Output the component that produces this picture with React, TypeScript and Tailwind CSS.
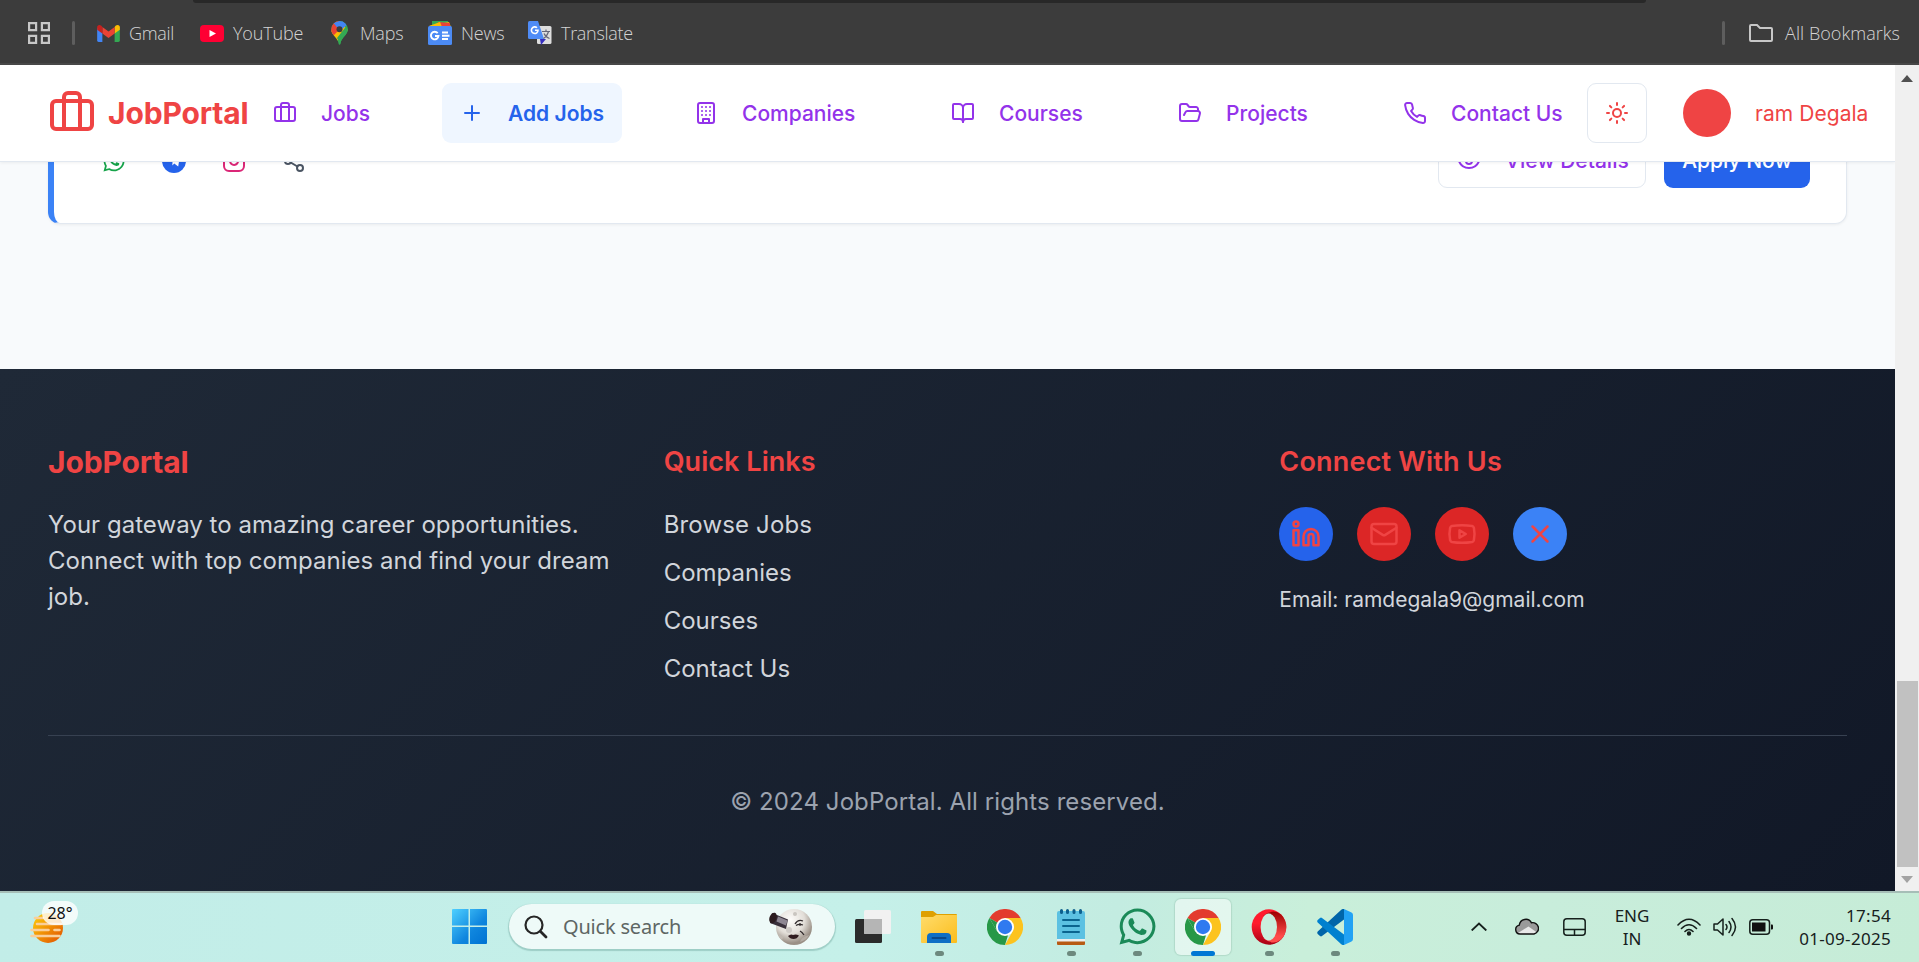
import React from "react";
import { FaWhatsapp } from "react-icons/fa";

const stroke = {
  viewBox: "0 0 24 24",
  fill: "none",
  stroke: "currentColor",
  strokeWidth: 2,
  strokeLinecap: "round" as const,
  strokeLinejoin: "round" as const,
};

function Icon({ name, className = "size-6" }: { name: string; className?: string }) {
  const shapes: Record<string, React.ReactNode> = {
    briefcase: (
      <>
        <path d="M16 20V4a2 2 0 0 0-2-2h-4a2 2 0 0 0-2 2v16" />
        <rect width="20" height="14" x="2" y="6" rx="2" />
      </>
    ),
    plus: <path d="M5 12h14M12 5v14" />,
    building: (
      <>
        <rect width="16" height="20" x="4" y="2" rx="2" />
        <path d="M9 22v-4h6v4M8 6h.01M16 6h.01M12 6h.01M12 10h.01M12 14h.01M16 10h.01M16 14h.01M8 10h.01M8 14h.01" />
      </>
    ),
    book: (
      <>
        <path d="M12 7v14" />
        <path d="M3 18a1 1 0 0 1-1-1V4a1 1 0 0 1 1-1h5a4 4 0 0 1 4 4 4 4 0 0 1 4-4h5a1 1 0 0 1 1 1v13a1 1 0 0 1-1 1h-6a3 3 0 0 0-3 3 3 3 0 0 0-3-3z" />
      </>
    ),
    folder: (
      <path d="m6 14 1.5-2.9A2 2 0 0 1 9.24 10H20a2 2 0 0 1 1.94 2.5l-1.54 6a2 2 0 0 1-1.95 1.5H4a2 2 0 0 1-2-2V5a2 2 0 0 1 2-2h3.9a2 2 0 0 1 1.69.9l.81 1.2a2 2 0 0 0 1.67.9H18a2 2 0 0 1 2 2v2" />
    ),
    phone: (
      <path d="M22 16.92v3a2 2 0 0 1-2.18 2 19.79 19.79 0 0 1-8.63-3.07 19.5 19.5 0 0 1-6-6 19.79 19.79 0 0 1-3.07-8.67A2 2 0 0 1 4.11 2h3a2 2 0 0 1 2 1.72 12.84 12.84 0 0 0 .7 2.81 2 2 0 0 1-.45 2.11L8.09 9.91a16 16 0 0 0 6 6l1.27-1.27a2 2 0 0 1 2.11-.45 12.84 12.84 0 0 0 2.81.7A2 2 0 0 1 22 16.92z" />
    ),
    sun: (
      <>
        <circle cx="12" cy="12" r="4" />
        <path d="M12 2v2M12 20v2M4.93 4.93l1.41 1.41M17.66 17.66l1.41 1.41M2 12h2M20 12h2M6.34 17.66l-1.41 1.41M19.07 4.93l-1.41 1.41" />
      </>
    ),
    eye: (
      <>
        <path d="M2.062 12.348a1 1 0 0 1 0-.696 10.75 10.75 0 0 1 19.876 0 1 1 0 0 1 0 .696 10.75 10.75 0 0 1-19.876 0" />
        <circle cx="12" cy="12" r="3" />
      </>
    ),
    instagram: (
      <>
        <rect width="20" height="20" x="2" y="2" rx="5" />
        <path d="M16 11.37A4 4 0 1 1 12.63 8 4 4 0 0 1 16 11.37zM17.5 6.5h.01" />
      </>
    ),
    share: (
      <>
        <circle cx="18" cy="5" r="3" />
        <circle cx="6" cy="12" r="3" />
        <circle cx="18" cy="19" r="3" />
        <path d="m8.59 13.51 6.83 3.98M15.41 6.51l-6.82 3.98" />
      </>
    ),
    linkedin: (
      <>
        <path d="M16 8a6 6 0 0 1 6 6v7h-4v-7a2 2 0 0 0-2-2 2 2 0 0 0-2 2v7h-4v-7a6 6 0 0 1 6-6z" />
        <rect width="4" height="12" x="2" y="9" />
        <circle cx="4" cy="4" r="2" />
      </>
    ),
    mail: (
      <>
        <rect width="20" height="16" x="2" y="4" rx="2" />
        <path d="m22 7-8.97 5.7a1.94 1.94 0 0 1-2.06 0L2 7" />
      </>
    ),
    youtube: (
      <>
        <path d="M2.5 17a24.12 24.12 0 0 1 0-10 2 2 0 0 1 1.4-1.4 49.56 49.56 0 0 1 16.2 0A2 2 0 0 1 21.5 7a24.12 24.12 0 0 1 0 10 2 2 0 0 1-1.4 1.4 49.55 49.55 0 0 1-16.2 0A2 2 0 0 1 2.5 17" />
        <path d="m10 15 5-3-5-3z" />
      </>
    ),
    x: <path d="M18 6 6 18M6 6l12 12" />,
  };
  return (
    <svg {...stroke} className={`shrink-0 ${className}`}>
      {shapes[name]}
    </svg>
  );
}

function Telegram() {
  return (
    <svg viewBox="0 0 24 24" className="size-6">
      <circle cx="12" cy="12" r="12" fill="#2563eb" />
      <path d="M5 11.800 18 6.500l-1.800 11-3.900-2.900-2 2 .2-3.600z" fill="#fff" />
    </svg>
  );
}

function Gmail() {
  return (
    <svg viewBox="0 0 24 18" className="h-[17px] w-[23px]">
      <path d="M0 3v13.500Q0 18 1.500 18H5.500V8z" fill="#4285f4" />
      <path d="M24 3v13.500Q24 18 22.500 18H18.500V8z" fill="#34a853" />
      <path d="M18.500 2v7L24 5V2.500C24 0 21.500-.8 19.500.9z" fill="#fbbc04" />
      <path d="M5.500 9V2L12 6.800 18.500 2v7L12 13.800z" fill="#ea4335" />
      <path d="M0 2.500V5l5.500 4V2L4.500.9C2.500-.8 0 0 0 2.500z" fill="#c5221f" />
    </svg>
  );
}

function YouTube() {
  return (
    <svg viewBox="0 0 24 17" className="h-[17px] w-6">
      <rect width="24" height="17" rx="4" fill="#ff0033" />
      <path d="M9.500 5v7l6.500-3.500z" fill="#fff" />
    </svg>
  );
}

function Maps() {
  return (
    <svg viewBox="0 0 17 24" className="h-6 w-[17px]">
      <defs>
        <clipPath id="pin">
          <path d="M8.500 0a8.300 8.300 0 0 1 8.300 8.300c0 4-3 6-5 9-1.600 2.400-2 3.200-2.400 5.500-.2 1.400-1.600 1.400-1.800 0-.4-2.300-.8-3.100-2.400-5.500-2-3-5-5-5-9A8.300 8.300 0 0 1 8.500 0z" />
        </clipPath>
      </defs>
      <g clipPath="url(#pin)">
        <rect width="17" height="24" fill="#34a853" />
        <path d="M-2 12 6 3l6 1 5 5-12 12z" fill="#fbbc04" />
        <path d="M0 0h8L9 8l-6 6H0z" fill="#ea4335" />
        <path d="M2.500 2 8 0h9v3L9 10z" fill="#4285f4" />
        <path d="M17 3 6 17l4 7 8-10z" fill="#34a853" />
      </g>
      <circle cx="8.500" cy="8.300" r="3" fill="#3c3c3c" />
    </svg>
  );
}

function News() {
  return (
    <svg viewBox="0 0 24 24" className="size-6">
      <path d="M4 0h16v5H4z" fill="#34a853" />
      <path d="m1 5 20-4 2 5z" fill="#fbbc04" />
      <path d="m10 1 12 1v5H9z" fill="#ea4335" />
      <path d="m1 5 11-4 2 5z" fill="#fbbc04" />
      <rect y="5" width="24" height="19" rx="1.500" fill="#4c8bf5" />
      <path d="M9.700 12.200A3.800 3.800 0 1 0 10.500 15H7M14 11.500h6M14 14.700h7.500M14 18h6" fill="none" stroke="#fff" strokeWidth="1.900" />
    </svg>
  );
}

function Translate() {
  return (
    <svg viewBox="0 0 24 24" className="size-6">
      <rect x="9" y="5" width="14.500" height="18" rx="1.500" fill="#dedede" />
      <path d="M12 18h6l-5 6z" fill="#3730c0" />
      <path d="M1.500 0H10l6 18H1.500Q0 18 0 16.500v-15Q0 0 1.500 0z" fill="#4f8cf7" />
      <path d="M9 6.800A3.300 3.300 0 1 0 10 9.200H7" fill="none" stroke="#fff" strokeWidth="1.600" />
      <path d="M14 10.500h8M18 8.500v2M20.500 10.500q-1.500 5-5 7M16 12.500q2 4 5.500 5" fill="none" stroke="#667" strokeWidth="1.200" />
    </svg>
  );
}

function BookmarksBar() {
  const text = "font-['Open_Sans',sans-serif] font-light text-[18px] leading-6 text-[#d4d4d4] whitespace-nowrap";
  return (
    <div className="relative flex h-[65px] shrink-0 items-center border-b-2 border-[#474747] bg-[#3c3c3c] pt-[3px] pl-7 pr-[19px]">
      <div className="absolute top-0 left-[193px] h-[3px] w-[1453px] rounded-b-[8px] bg-[#282828]" />
      <svg viewBox="0 0 22 22" className="size-[22px]" fill="none" stroke="#c7c7c7" strokeWidth="2.200">
        <path d="M1.100 1.100h7v7h-7zM13.900 1.100h7v7h-7zM1.100 13.900h7v7h-7zM13.900 13.900h7v7h-7z" />
      </svg>
      <div className="ml-[22px] h-6 w-[3px] rounded bg-[#5e5e5e]" />
      <div className="ml-[22px] flex w-[103px] items-center gap-[9px]"><Gmail /><span className={`${text} tracking-[-0.3px]`}>Gmail</span></div>
      <div className="flex w-[131px] items-center gap-[9px]"><YouTube /><span className={`${text} tracking-[-0.15px]`}>YouTube</span></div>
      <div className="flex w-[97px] items-center gap-[12px]"><Maps /><span className={`${text} tracking-[-0.2px]`}>Maps</span></div>
      <div className="flex w-[100px] items-center gap-[9px]"><News /><span className={`${text} tracking-[-0.2px]`}>News</span></div>
      <div className="flex items-center gap-[9px]"><Translate /><span className={`${text} tracking-[-0.3px]`}>Translate</span></div>
      <div className="ml-auto h-6 w-[3px] rounded bg-[#5e5e5e]" />
      <svg viewBox="0 0 24 18" className="mr-3 ml-6 h-[18px] w-6" fill="none" stroke="#c7c7c7" strokeWidth="2">
        <path d="M1 16V2q0-1 1-1h6l3 3h11q1 0 1 1v11q0 1-1 1H2q-1 0-1-1z" />
      </svg>
      <span className={`${text} tracking-[0.05px]`}>All Bookmarks</span>
    </div>
  );
}

function NavItem({ icon, label, width }: { icon: string; label: string; width: string }) {
  return (
    <div className={`flex h-[60px] items-center gap-6 pl-[18px] ${width}`}>
      <Icon name={icon} />
      <span className="whitespace-nowrap pt-px">{label}</span>
    </div>
  );
}

function Header() {
  return (
    <header className="relative z-10 flex h-[97px] w-full shrink-0 items-center border-b border-[#e2e8f0] bg-white pl-12 text-[21px] font-medium text-[#9333ea] shadow-[0_1px_3px_rgba(0,0,0,0.06)]">
      <div className="flex w-[207px] items-center gap-3 text-[#ef4444]">
        <Icon name="briefcase" className="size-12" />
        <span className="text-[30px] font-bold leading-[42px] tracking-[-0.15px]">JobPortal</span>
      </div>
      <NavItem icon="briefcase" label="Jobs" width="w-[187px]" />
      <div className="mr-[54px] flex h-[60px] w-[180px] items-center gap-6 rounded-[9px] bg-[#eff6ff] pl-[18px] font-semibold text-[#2563eb]">
        <Icon name="plus" />
        <span className="whitespace-nowrap pt-px">Add Jobs</span>
      </div>
      <NavItem icon="building" label="Companies" width="w-[257px]" />
      <NavItem icon="book" label="Courses" width="w-[227px]" />
      <NavItem icon="folder" label="Projects" width="w-[225px]" />
      <NavItem icon="phone" label="Contact Us" width="w-[202px]" />
      <div className="flex size-[60px] shrink-0 items-center justify-center rounded-[9px] border border-[#e2e8f0] text-[#ef4444]">
        <Icon name="sun" />
      </div>
      <div className="ml-9 size-12 shrink-0 rounded-full bg-[#ef4444]" />
      <span className="ml-6 whitespace-nowrap pt-px font-normal tracking-[0.05px] text-[#ef4444]">ram Degala</span>
    </header>
  );
}

function JobCard() {
  return (
    <main className="h-[207px] shrink-0 overflow-hidden bg-[#f8fafc] px-12">
      <div className="-mt-16 flex h-[126px] items-end rounded-xl border border-l-[6px] border-[#e2e8f0] border-l-[#3b82f6] bg-white pr-9 pb-[35px] pl-12 shadow-[0_1px_3px_rgba(0,0,0,0.06)]">
        <div className="flex h-[54px] items-center gap-9">
          <FaWhatsapp className="size-6 text-[#16a34a]" />
          <Telegram />
          <Icon name="instagram" className="size-6 text-[#db2777]" />
          <Icon name="share" className="size-6 text-[#4b5563]" />
        </div>
        <div className="ml-auto flex gap-[18px] text-[21px] font-medium">
          <div className="flex h-[54px] w-[208px] items-center gap-6 rounded-[9px] border border-[#e2e8f0] pl-[18px] text-[#9333ea]">
            <Icon name="eye" />
            <span className="whitespace-nowrap">View Details</span>
          </div>
          <div className="flex h-[54px] w-[146px] items-center justify-center rounded-[9px] bg-[#2563eb] text-white">Apply Now</div>
        </div>
      </div>
    </main>
  );
}

function Footer() {
  const social = [
    { icon: "linkedin", bg: "bg-[#2563eb]" },
    { icon: "mail", bg: "bg-[#dc2626]" },
    { icon: "youtube", bg: "bg-[#dc2626]" },
    { icon: "x", bg: "bg-[#3b82f6]" },
  ];
  return (
    <footer className="h-[522px] shrink-0 bg-[linear-gradient(135deg,#1f2937,#111827)] px-12 pt-[72px] text-2xl leading-9 text-[#d1d5db]">
      <div className="grid grid-cols-3 gap-12">
        <section>
          <h3 className="mb-6 text-[30px] font-bold leading-[42px] tracking-[-0.15px] text-[#ef4444]">JobPortal</h3>
          <p className="tracking-[0.03px]">Your gateway to amazing career opportunities. Connect with top companies and find your dream job.</p>
        </section>
        <section>
          <h4 className="mb-6 text-[27px] font-semibold leading-[42px] tracking-[0.05px] text-[#ef4444]">Quick Links</h4>
          <ul className="flex flex-col gap-3">
            <li className="tracking-[0.15px]">Browse Jobs</li>
            <li>Companies</li>
            <li>Courses</li>
            <li>Contact Us</li>
          </ul>
        </section>
        <section>
          <h4 className="mb-6 text-[27px] font-semibold leading-[42px] tracking-[0.2px] text-[#ef4444]">Connect With Us</h4>
          <div className="flex gap-6 text-[#ef4444]">
            {social.map((s) => (
              <div key={s.icon} className={`flex size-[54px] items-center justify-center rounded-full ${s.bg}`}>
                <Icon name={s.icon} className="size-[30px]" />
              </div>
            ))}
          </div>
          <p className="mt-6 text-[21px] leading-[30px]">Email: ramdegala9@gmail.com</p>
        </section>
      </div>
      <div className="mt-12 border-t border-[#374151] pt-12 text-center tracking-[0.09px] text-[#9ca3af]">© 2024 JobPortal. All rights reserved.</div>
    </footer>
  );
}

function Scrollbar() {
  return (
    <div className="flex w-6 flex-col items-center bg-[#f0f0f0]">
      <svg viewBox="0 0 12 7" className="mt-[10px] h-[7px] w-3"><path d="M0 7 6 0l6 7z" fill="#505050" /></svg>
      <div className="mt-[599px] h-[186px] w-[21px] bg-[#c1c1c1]" />
      <svg viewBox="0 0 12 7" className="mt-[9px] h-[7px] w-3"><path d="M0 0h12L6 7z" fill="#a3a3a3" /></svg>
    </div>
  );
}

function Weather() {
  return (
    <div className="relative ml-[29px] h-[44px] w-[50px]">
      <svg viewBox="0 0 36 44" className="h-[44px] w-9">
        <defs>
          <linearGradient id="sun" x1="0" y1="0" x2="1" y2="1">
            <stop stopColor="#ffd20a" />
            <stop offset="1" stopColor="#e04e00" />
          </linearGradient>
        </defs>
        <circle cx="19" cy="27" r="15" fill="url(#sun)" />
        <path d="M6 17h8M8 23h24M2.500 29h17M25.500 29h5M2.500 35h28" stroke="#f9cf9a" strokeWidth="2.600" strokeLinecap="round" />
      </svg>
      <div className="absolute top-0 left-[13px] flex h-6 w-9 items-center justify-center rounded-full bg-white/80 font-['Noto_Sans',sans-serif] text-[16px] text-[#111]">28°</div>
    </div>
  );
}

function Moon() {
  return (
    <svg viewBox="0 0 44 38" className="h-[38px] w-11">
      <defs>
        <radialGradient id="moon" cx=".4" cy=".3" r=".65">
          <stop stopColor="#fdfcfa" />
          <stop offset=".6" stopColor="#e2ded8" />
          <stop offset="1" stopColor="#9a9086" />
        </radialGradient>
      </defs>
      <circle cx="25" cy="19" r="18" fill="url(#moon)" />
      <circle cx="26" cy="6" r="2" fill="#c9c5c0" />
      <path d="M31 34q1-5 9-7-2 5-9 7" fill="#b4aca4" />
      <path d="M9 26q4 0 5 3.500l-1 2.500q-3-2-4-6" fill="#c0b9b2" />
      <circle cx="20" cy="22" r="3" fill="#cfcbc7" />
      <path d="M26 16q3-5 8-3M27 17.500q3-2 7-.5M31 23q2 1 4 4" fill="none" stroke="#302a2b" strokeWidth="1.300" />
      <circle cx="31" cy="16.500" r="1.200" fill="#302a2b" />
      <path d="M19 28q3-2.500 5-1 3-1 6 .500-2 3.500-5.500 3.500T19 28" fill="#301c20" />
      <path d="m3 5 16 6.500-2 9.500L1 15z" fill="#39303b" />
      <path d="m9 8.500 9.500 4-1.500 5-9.500-4z" fill="#8e8793" />
      <ellipse cx="4" cy="10" rx="3.500" ry="5.500" transform="rotate(20 4 10)" fill="#2b1c20" />
    </svg>
  );
}

function Chrome() {
  return (
    <svg viewBox="0 0 48 48" className="size-9">
      <path d="M24 24 3.200 12A24 24 0 0 1 44.800 12z" fill="#e33b2e" />
      <path d="M24 48A24 24 0 0 1 3.200 12l10.400 18L28 35z" fill="#279847" />
      <path d="M3.200 12 13.600 30 24 24z" fill="#279847" />
      <path d="M44.800 12H24v4l12 8-2 6-10 18A24 24 0 0 0 44.800 12z" fill="#fcc31e" />
      <circle cx="24" cy="24" r="12" fill="#fff" />
      <circle cx="24" cy="24" r="9.600" fill="#2f7af0" />
    </svg>
  );
}

function Folder() {
  return (
    <svg viewBox="0 0 36 36" className="size-9">
      <defs>
        <linearGradient id="fold" x1="0" y1="0" x2="1" y2="1">
          <stop stopColor="#ffdc6b" />
          <stop offset="1" stopColor="#fbbd1c" />
        </linearGradient>
      </defs>
      <path d="M0 3q0-1 1-1h11l4 3h19q1 0 1 1v6H0z" fill="#dfa000" />
      <path d="M0 8h12l3-2h21v27q0 1-1 1H1q-1 0-1-1z" fill="url(#fold)" />
      <path d="M6 34V28q0-4 4-4h16q4 0 4 4v6z" fill="#0f6fc5" />
      <path d="M11.500 29h13" stroke="#0a4a8c" strokeWidth="2" strokeLinecap="round" />
    </svg>
  );
}

function Notepad() {
  return (
    <svg viewBox="0 0 28 36" className="h-9 w-7">
      <path d="M0 31h28v4q0 1-1 1H1q-1 0-1-1z" fill="#b75a13" />
      <path d="M0 29h28v3.500H0z" fill="#eee" />
      <path d="M0 4q0-2 2-2h24q2 0 2 2v26H0z" fill="#5cc1e2" />
      <path d="M4.500 1.500v2M10.500 1.500v2M17 1.500v2M23.500 1.500v2" stroke="#0d5f8d" strokeWidth="3" strokeLinecap="round" />
      <path d="M6 11h16M6 17h16M6 23h16" stroke="#0b648f" strokeWidth="2" strokeLinecap="round" />
    </svg>
  );
}

function Opera() {
  return (
    <svg viewBox="0 0 36 36" className="size-9">
      <defs>
        <linearGradient id="op" x1="0" y1="0" x2="0" y2="1">
          <stop stopColor="#ff1b2d" />
          <stop offset=".4" stopColor="#ff1b2d" />
          <stop offset="1" stopColor="#a70014" />
        </linearGradient>
        <linearGradient id="op2" x1="0" y1="0" x2="0" y2="1">
          <stop stopColor="#9c0000" />
          <stop offset=".8" stopColor="#ff4b4b" />
        </linearGradient>
      </defs>
      <ellipse cx="18" cy="18" rx="17.300" ry="17.700" fill="url(#op)" />
      <path d="M12 7q10-8 18-1.500a17.500 17.500 0 0 1 0 25Q22 37 12 29q11 3 14-11Q23 4 12 7z" fill="url(#op2)" />
      <ellipse cx="17.800" cy="18" rx="8.200" ry="13.500" fill="#c9eedd" />
    </svg>
  );
}

function VsCode() {
  return (
    <svg viewBox="0 0 36 36" className="size-9">
      <path d="M27 0v10.500L5 27q-1 .8-2 0l-2.300-2q-1-1.200 0-2.500L24 1q1.500-1.300 3-1z" fill="#0065a9" />
      <path d="M27 36V25.500L5 9q-1-.8-2 0L.7 11q-1 1.200 0 2.500L24 35q1.500 1.300 3 1z" fill="#0080cf" />
      <path d="m27 0 7.500 3.500Q36 4.300 36 6v24q0 1.700-1.500 2.500L27 36z" fill="#22a2f4" />
    </svg>
  );
}

function Task({ children, dot, active }: { children: React.ReactNode; dot?: boolean; active?: boolean }) {
  return (
    <div className="flex w-[66px] shrink-0 justify-center">
      <div className={`relative flex h-14 w-14 items-center justify-center rounded-md ${active ? "bg-white/50 shadow-[0_0_1px_1px_rgba(60,110,90,0.15)]" : ""}`}>
        {children}
        {dot && <div className="absolute bottom-[-1px] h-[5px] w-[9px] rounded-full bg-[#6d897e]" />}
        {active && <div className="absolute bottom-[-1px] h-[5px] w-6 rounded-full bg-[#0078d4]" />}
      </div>
    </div>
  );
}

function Taskbar() {
  const label = "font-['Noto_Sans',sans-serif] text-[17px] leading-[23px] text-[#16201c]";
  return (
    <div className="flex h-[71px] shrink-0 items-center border-t-2 border-[#a6beb7] bg-[linear-gradient(100deg,#c2ede8_0%,#c5f0e9_45%,#c3ece1_58%,#c9efda_68%,#c8eddb_80%,#c6ecd7_100%)] pb-[2px]">
      <div className="flex w-[452px] -translate-y-1"><Weather /></div>
      <svg viewBox="0 0 35 35" className="size-[35px] shrink-0">
        <defs>
          <linearGradient id="win" x1="0" y1="0" x2="1" y2="1">
            <stop stopColor="#4fd0ff" />
            <stop offset=".6" stopColor="#0f86de" />
            <stop offset="1" stopColor="#0072d2" />
          </linearGradient>
        </defs>
        <path d="M1 0h15.500v16.500H0V1q0-1 1-1zM18 0H34q1 0 1 1v15.500H18zM0 18h16.500V35H1q-1 0-1-1zM18 18H35V34q0 1-1 1H18z" fill="url(#win)" />
      </svg>
      <div className="ml-[22px] flex h-[45px] w-[326px] shrink-0 items-center rounded-full bg-[#eefaf8] pr-[22px] pl-[15px] shadow-[0_1px_1px_1px_rgba(70,130,120,0.3)]">
        <svg viewBox="0 0 24 24" className="size-6" fill="none" stroke="#262626" strokeLinecap="round">
          <circle cx="10" cy="10" r="8.500" strokeWidth="2.200" />
          <path d="m16.500 16.500 5.500 5.500" strokeWidth="2.800" />
        </svg>
        <span className="ml-[15px] font-['Noto_Sans',sans-serif] text-[20px] tracking-[-0.2px] text-[#5e6664]">Quick search</span>
        <div className="ml-auto"><Moon /></div>
      </div>
      <div className="ml-[5px] flex">
        <Task>
          <svg viewBox="0 0 36 36" className="size-9">
            <rect y="10" width="27" height="24" rx="1.500" fill="#2b2b2b" />
            <rect x="9" y="1" width="27" height="24" rx="1.500" fill="#f1f1f1" />
            <path d="M9 10h18v15H10.500Q9 25 9 23.500z" fill="#b5b5b5" />
          </svg>
        </Task>
        <Task dot><Folder /></Task>
        <Task><Chrome /></Task>
        <Task dot><Notepad /></Task>
        <Task dot>
          <FaWhatsapp className="size-[41px] text-[#1b8a58]" />
        </Task>
        <Task active><Chrome /></Task>
        <Task dot><Opera /></Task>
        <Task dot><VsCode /></Task>
      </div>
      <div className="ml-auto flex items-center pr-[28px]">
        <svg viewBox="0 0 16 9" className="h-[9px] w-4" fill="none" stroke="#16201c" strokeWidth="1.800"><path d="m.7 8.500 7.300-7 7.300 7" /></svg>
        <svg viewBox="0 0 24 17" className="ml-7 h-[17px] w-6">
          <path d="M5 16a4.500 4.500 0 0 1-.7-8.900 6.500 6.500 0 0 1 12.200-2.300A5.600 5.600 0 0 1 19 16z" fill="#9a9a9a" />
          <path d="M3 15 13.500 8.500 22 14.500 19 16H5z" fill="#e8e8e8" />
          <path d="M5 16a4.500 4.500 0 0 1-.7-8.900 6.500 6.500 0 0 1 12.200-2.300A5.600 5.600 0 0 1 19 16z" fill="none" stroke="#111" strokeWidth="1.400" />
        </svg>
        <svg viewBox="0 0 23 18" className="ml-6 h-[18px] w-[23px]" fill="none" stroke="#16201c" strokeWidth="1.500">
          <rect x=".8" y=".8" width="21.400" height="16.400" rx="3" />
          <path d="M1 11.500h21M11.500 11.500V17" />
        </svg>
        <div className={`ml-[28px] w-[36px] text-center ${label}`}>ENG<br />IN</div>
        <svg viewBox="0 0 24 18" className="ml-[27px] h-[18px] w-6" fill="none" stroke="#16201c" strokeWidth="1.600" strokeLinecap="round">
          <path d="M1 7q11-11.500 22 0M4.500 10.500q7.500-7.500 15 0M8 13.500q4-4 8 0" />
          <circle cx="12" cy="15.500" r="1.400" fill="#16201c" />
        </svg>
        <svg viewBox="0 0 24 20" className="ml-3 h-5 w-6" fill="none" stroke="#16201c" strokeWidth="1.500" strokeLinejoin="round" strokeLinecap="round">
          <path d="M1 7h3.500L10 2v16l-5.500-5H1zM13 7.500q2 2.500 0 5M16 4.500q4 5.500 0 11M19 1.500q7 8.500 0 17" />
        </svg>
        <svg viewBox="0 0 24 16" className="ml-3 h-4 w-6">
          <rect x=".8" y=".8" width="19.700" height="14.400" rx="3" fill="none" stroke="#16201c" strokeWidth="1.500" />
          <rect x="3" y="3.500" width="13.500" height="9" fill="#111" />
          <path d="M22 5.500h1q1 0 1 1v3q0 1-1 1h-1z" fill="#111" />
        </svg>
        <div className={`ml-6 w-[94px] text-right whitespace-nowrap tracking-[0.3px] ${label}`}>17:54<br />01-09-2025</div>
      </div>
    </div>
  );
}

export default function App() {
  return (
    <div className="flex h-[962px] w-[1919px] flex-col overflow-hidden font-['Inter',sans-serif]">
      <BookmarksBar />
      <div className="flex h-[826px] shrink-0">
        <div className="flex w-[1895px] flex-col overflow-hidden">
          <Header />
          <JobCard />
          <Footer />
        </div>
        <Scrollbar />
      </div>
      <Taskbar />
    </div>
  );
}
